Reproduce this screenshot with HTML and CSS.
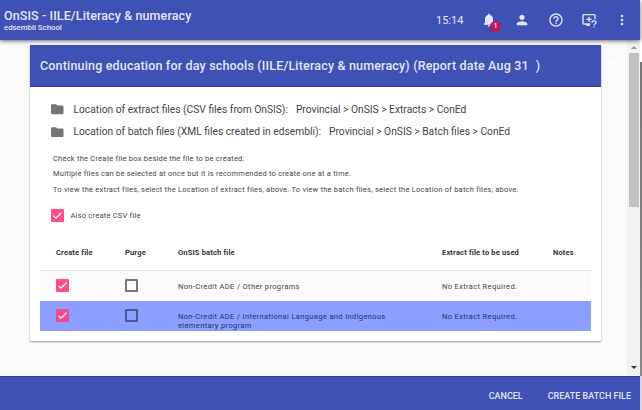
FILE: index.html
```html
<!DOCTYPE html>
<html lang="en">
<head>
<meta charset="utf-8">
<title>OnSIS - IILE/Literacy &amp; numeracy</title>
<link rel="stylesheet" href="styles.css">
</head>
<body>
<div class="window">
<div class="app">
  <header class="topbar">
    <div class="brand">
      <h1>OnSIS - IILE/Literacy &amp; numeracy</h1>
      <p>edsembli School</p>
    </div>
    <span class="clock">15:14</span>
    <nav class="actions">
      <span class="bell">
        <svg class="icon" viewBox="0 0 24 24"><path d="M12 22c1.100 0 2-.9 2-2h-4c0 1.100.9 2 2 2zm6-6v-5c0-3.070-1.640-5.640-4.500-6.320V4c0-.83-.67-1.500-1.500-1.500s-1.500.67-1.500 1.500v.68C7.630 5.360 6 7.920 6 11v5l-2 2v1h16v-1l-2-2z"/></svg>
        <span class="badge">1</span>
      </span>
      <svg class="icon" viewBox="0 0 24 24"><path d="M12 12c2.210 0 4-1.790 4-4s-1.790-4-4-4-4 1.790-4 4 1.790 4 4 4zm0 2c-2.670 0-8 1.340-8 4v2h16v-2c0-2.660-5.330-4-8-4z"/></svg>
      <svg class="icon" viewBox="0 0 24 24"><path d="M11 18h2v-2h-2v2zm1-16C6.480 2 2 6.480 2 12s4.480 10 10 10 10-4.480 10-10S17.520 2 12 2zm0 18c-4.410 0-8-3.590-8-8s3.590-8 8-8 8 3.590 8 8-3.590 8-8 8zm0-14c-2.210 0-4 1.790-4 4h2c0-1.100.9-2 2-2s2 .9 2 2c0 2-3 1.750-3 5h2c0-2.250 3-2.500 3-5 0-2.210-1.790-4-4-4z"/></svg>
      <svg class="icon" viewBox="0 0 24 24"><path d="M4 3h16a2 2 0 0 1 2 2v6h-2V5H4v12h10v2h-1v2H8v-2H4a2 2 0 0 1-2-2V5a2 2 0 0 1 2-2zM11 7h2v3h3v2h-3v3h-2v-3H8v-2h3z"/><path class="line" d="M16.500 16c0-3.500 6-3.500 6 0 0 2-3 2-3 4M19.500 21.200v2"/></svg>
      <svg class="icon" viewBox="0 0 24 24"><path d="M12 8c1.100 0 2-.9 2-2s-.9-2-2-2-2 .9-2 2 .9 2 2 2zm0 2c-1.100 0-2 .9-2 2s.9 2 2 2 2-.9 2-2-.9-2-2-2zm0 6c-1.100 0-2 .9-2 2s.9 2 2 2 2-.9 2-2-.9-2-2-2z"/></svg>
    </nav>
  </header>

  <div class="body">
    <main class="content">
      <section class="card">
        <h2><span>Continuing education for day schools (IILE/Literacy &amp; numeracy) (Report date Aug 31</span><span class="paren">)</span><span class="year">2018</span></h2>
        <div class="locations">
          <div class="location">
            <svg class="folder" viewBox="2 4 20 16"><path d="M10 4H4c-1.100 0-2 .9-2 2v12c0 1.100.9 2 2 2h16c1.100 0 2-.9 2-2V8c0-1.100-.9-2-2-2h-8l-2-2z"/></svg>
            <span>Location of extract files (CSV files from OnSIS):</span><span class="path">Provincial &gt; OnSIS &gt; Extracts &gt; ConEd</span>
          </div>
          <div class="location">
            <svg class="folder" viewBox="2 4 20 16"><path d="M10 4H4c-1.100 0-2 .9-2 2v12c0 1.100.9 2 2 2h16c1.100 0 2-.9 2-2V8c0-1.100-.9-2-2-2h-8l-2-2z"/></svg>
            <span>Location of batch files (XML files created in edsembli):</span><span class="path">Provincial &gt; OnSIS &gt; Batch files &gt; ConEd</span>
          </div>
        </div>
        <div class="notes">
          <p>Check the Create file box beside the file to be created.</p>
          <p>Multiple files can be selected at once but it is recommended to create one at a time.</p>
          <p>To view the extract files, select the Location of extract files, above. To view the batch files, select the Location of batch files, above.</p>
        </div>
        <div class="option">
          <svg class="check" viewBox="0 0 13 13"><path d="M2.500 6.700 5 9.200l5.500-5.500"/></svg>
          <span>Also create CSV file</span>
        </div>
        <div class="table">
          <div class="row head">
            <span>Create file</span><span>Purge</span><span>OnSIS batch file</span><span>Extract file to be used</span><span>Notes</span>
          </div>
          <div class="row">
            <span><svg class="check" viewBox="0 0 13 13"><path d="M2.500 6.700 5 9.200l5.500-5.500"/></svg></span>
            <span><i class="box"></i></span>
            <span class="cell">Non-Credit ADE / Other programs</span>
            <span class="cell">No Extract Required.</span><span></span>
          </div>
          <div class="row selected">
            <span><svg class="check" viewBox="0 0 13 13"><path d="M2.500 6.700 5 9.200l5.500-5.500"/></svg></span>
            <span><i class="box"></i></span>
            <span class="cell">Non-Credit ADE / International Language and Indigenous<br>elementary program</span>
            <span class="cell">No Extract Required.</span><span></span>
          </div>
        </div>
      </section>
    </main>
    <div class="scrollbar"><i class="up"></i><i class="thumb"></i><i class="down"></i></div>
  </div>

  <footer class="bottombar"><span>CANCEL</span><span>CREATE BATCH FILE</span></footer>
</div>
<div class="edge"></div>
</div>
</body>
</html>
```

FILE: styles.css
```css
* { box-sizing: border-box; }
body { margin: 0; font-family: Roboto, "Liberation Sans", sans-serif; color: #444; }
h1, h2, p { margin: 0; font-weight: 400; }
svg { display: block; flex: none; }
span { white-space: nowrap; }

.window { display: flex; width: 642px; height: 410px; overflow: hidden; }
.app { width: 640px; display: flex; flex-direction: column; background: #fafafa; }
.edge { width: 2px; background: linear-gradient(#fff 62px, #777 62px, #888 376px, #d5d5e5 376px); }

.topbar { height: 40px; flex: none; display: flex; align-items: center; background: #3f51b5; color: #e3e6f6; box-shadow: 0 1px 4px rgba(0,0,0,.6); position: relative; }
.brand { width: 436px; padding-left: 4px; }
.brand h1 { font-size: 12.500px; line-height: 14px; font-weight: 500; letter-spacing: .1px; }
.brand p { font-size: 7.800px; line-height: 9px; font-weight: 500; }
.clock { width: 45px; font-size: 11px; }
.actions { display: flex; gap: 17.300px; }
.icon { width: 16px; height: 16px; fill: #e3e6f6; }
.line { fill: none; stroke: #e3e6f6; stroke-width: 2; }
.bell { position: relative; }
.badge { position: absolute; left: 9px; top: 9px; width: 11px; height: 11px; border-radius: 50%; background: #c2185b; font-size: 7px; line-height: 11px; font-weight: 700; text-align: center; }

.body { flex: 1; min-height: 0; display: flex; }
.content { flex: 1; min-width: 0; padding: 5px 26px 0 30px; }
.card { height: 296px; background: #fff; border-radius: 1px; box-shadow: 0 1px 2px rgba(0,0,0,.4); }
.card h2 { height: 42px; padding: 0 10px; display: flex; align-items: center; background: #3f51b5; border-bottom: 1px solid #303f9f; color: #e3e6f6; font-size: 12.500px; font-weight: 500; letter-spacing: .17px; }
.paren { margin-left: 7px; }
.year { margin-left: 63px; color: #fff; font-size: 12px; }

.locations { padding: 11px 0 0 21px; color: #444; font-size: 10.250px; }
.location { height: 22.500px; display: flex; align-items: center; }
.folder { width: 12.500px; height: 10.500px; margin-right: 10px; fill: #757575; }
.path { margin-left: 8px; }
.notes { height: 54px; padding: 8px 0 0 23px; font-size: 7.500px; line-height: 15.400px; letter-spacing: .23px; white-space: nowrap; }
.option { height: 13px; margin: 12px 0 0 21px; display: flex; align-items: center; gap: 6.500px; font-size: 7.500px; letter-spacing: .23px; }
.check { width: 13px; height: 13px; border-radius: 1px; background: #ff4f8b; }
.check path { fill: none; stroke: #fff; stroke-width: 1.300; }
.box { display: block; width: 13px; height: 13px; border: 2px solid #777; border-radius: 1px; }

.table { margin: 12px 10px 0; }
.row { height: 30px; padding: 8.600px 0 0 16px; display: grid; grid-template-columns: 69px 53px 264px 111px 1fr; background: #fafafa; font-size: 7.500px; line-height: 9.500px; letter-spacing: .36px; }
.row.head { height: 36.600px; padding-top: 14px; background: #fff; border-bottom: 1px solid #e3e3e3; font-weight: 700; letter-spacing: .17px; color: #333; }
.row.selected { background: #8c9eff; color: #263064; }
.selected .check { background: #ef4a91; }
.selected .box { border-color: #4d5690; }
.cell { padding-top: 2.400px; }

.scrollbar { width: 13px; flex: none; padding: 6px 1px 7px; display: flex; flex-direction: column; align-items: center; background: #f1f1f1; }
.up { border: 3px solid transparent; border-top: 0; border-bottom: 3px solid #999; }
.thumb { width: 10px; height: 154px; margin-top: 4px; background: #c1c1c1; }
.down { margin-top: auto; border: 3px solid transparent; border-bottom: 0; border-top: 3px solid #333; }

.bottombar { height: 34px; padding: 4px 9px 0 0; display: flex; align-items: center; justify-content: flex-end; gap: 25px; background: #3f51b5; border-top: 1px solid #303f9f; color: #e3e6f6; font-size: 9px; font-weight: 500; }
```
